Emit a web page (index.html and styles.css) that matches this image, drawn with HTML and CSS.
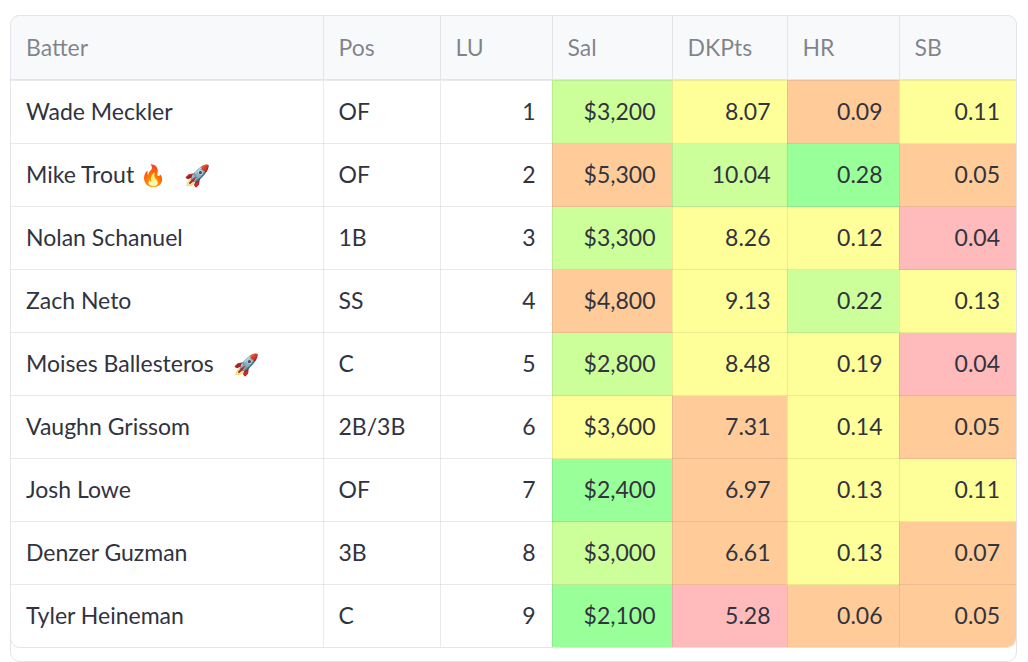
FILE: index.html
```html
<!DOCTYPE html>
<html lang="en">
<head>
<meta charset="utf-8">
<title>Batters</title>
<link rel="stylesheet" href="styles.css">
</head>
<body>
<div class="frame">
  <div class="tablebox">
    <table class="grid">
      <colgroup>
        <col class="c-batter"><col class="c-pos"><col class="c-lu"><col class="c-sal"><col class="c-dk"><col class="c-hr"><col class="c-sb">
      </colgroup>
      <thead>
        <tr><th>Batter</th><th>Pos</th><th>LU</th><th>Sal</th><th>DKPts</th><th>HR</th><th>SB</th></tr>
      </thead>
      <tbody>
        <tr><td>Wade Meckler</td><td>OF</td><td class="num">1</td><td class="num lg">$3,200</td><td class="num ye">8.07</td><td class="num or">0.09</td><td class="num ye">0.11</td></tr>
        <tr><td>Mike Trout <span class="emo fire">🔥</span><span class="emo rocket">🚀</span></td><td>OF</td><td class="num">2</td><td class="num or">$5,300</td><td class="num lg">10.04</td><td class="num gr">0.28</td><td class="num or">0.05</td></tr>
        <tr><td>Nolan Schanuel</td><td>1B</td><td class="num">3</td><td class="num lg">$3,300</td><td class="num ye">8.26</td><td class="num ye">0.12</td><td class="num pk">0.04</td></tr>
        <tr><td>Zach Neto</td><td>SS</td><td class="num">4</td><td class="num or">$4,800</td><td class="num ye">9.13</td><td class="num lg">0.22</td><td class="num ye">0.13</td></tr>
        <tr><td>Moises Ballesteros <span class="emo rocket solo">🚀</span></td><td>C</td><td class="num">5</td><td class="num lg">$2,800</td><td class="num ye">8.48</td><td class="num ye">0.19</td><td class="num pk">0.04</td></tr>
        <tr><td>Vaughn Grissom</td><td>2B/3B</td><td class="num">6</td><td class="num ye">$3,600</td><td class="num or">7.31</td><td class="num ye">0.14</td><td class="num or">0.05</td></tr>
        <tr><td>Josh Lowe</td><td>OF</td><td class="num">7</td><td class="num gr">$2,400</td><td class="num or">6.97</td><td class="num ye">0.13</td><td class="num ye">0.11</td></tr>
        <tr><td>Denzer Guzman</td><td>3B</td><td class="num">8</td><td class="num lg">$3,000</td><td class="num or">6.61</td><td class="num ye">0.13</td><td class="num or">0.07</td></tr>
        <tr><td>Tyler Heineman</td><td>C</td><td class="num">9</td><td class="num gr">$2,100</td><td class="num pk">5.28</td><td class="num or">0.06</td><td class="num or">0.05</td></tr>
      </tbody>
    </table>
  </div>
</div>
</body>
</html>
```
FILE: styles.css
```css
html, body {
  margin: 0;
  padding: 0;
  background: #ffffff;
}

body {
  font-family: Lato, "Noto Sans", "Noto Color Emoji", sans-serif;
  color: #31333f;
}

.frame {
  margin: 15px 11px 0 10px;
  border: 1px solid #e4e5e9;
  border-radius: 10px;
  padding-bottom: 13px;
}

.tablebox {
  margin: -1px -1px 0 -1px;
  border: 1px solid #e4e5e9;
  border-radius: 10px;
  overflow: hidden;
}

.grid {
  width: 100%;
  border-collapse: collapse;
  table-layout: fixed;
  font-size: 23px;
}

.c-batter { width: 312px; }
.c-pos { width: 117px; }
.c-lu { width: 112px; }
.c-sal { width: 120px; }
.c-dk { width: 115px; }
.c-hr { width: 112px; }
.c-sb { width: auto; }

.grid th,
.grid td {
  border: 1px solid rgba(49, 51, 63, 0.1);
  padding: 0 16px 3px 15px;
  white-space: nowrap;
}

.grid tr > :first-child { border-left: none; }
.grid tr > :last-child { border-right: none; }
.grid thead tr > * { border-top: none; }
.grid tbody tr:last-child > * { border-bottom: none; }

.grid th {
  height: 61px;
  padding-bottom: 2px;
  background: #f8f9fb;
  color: rgba(49, 51, 63, 0.6);
  font-weight: 400;
  text-align: left;
  border-bottom-width: 2px;
}

.grid td {
  height: 59px;
  text-align: left;
}

.grid td.num { text-align: right; }

.lg { background: #ccff99; }
.ye { background: #ffff99; }
.or { background: #ffcc99; }
.gr { background: #99ff99; }
.pk { background: #ffbbbb; }

.emo {
  font-family: "Noto Color Emoji", sans-serif;
  font-size: 21px;
}

.rocket { margin-left: 18px; }
.rocket.solo { margin-left: 14px; }
```
